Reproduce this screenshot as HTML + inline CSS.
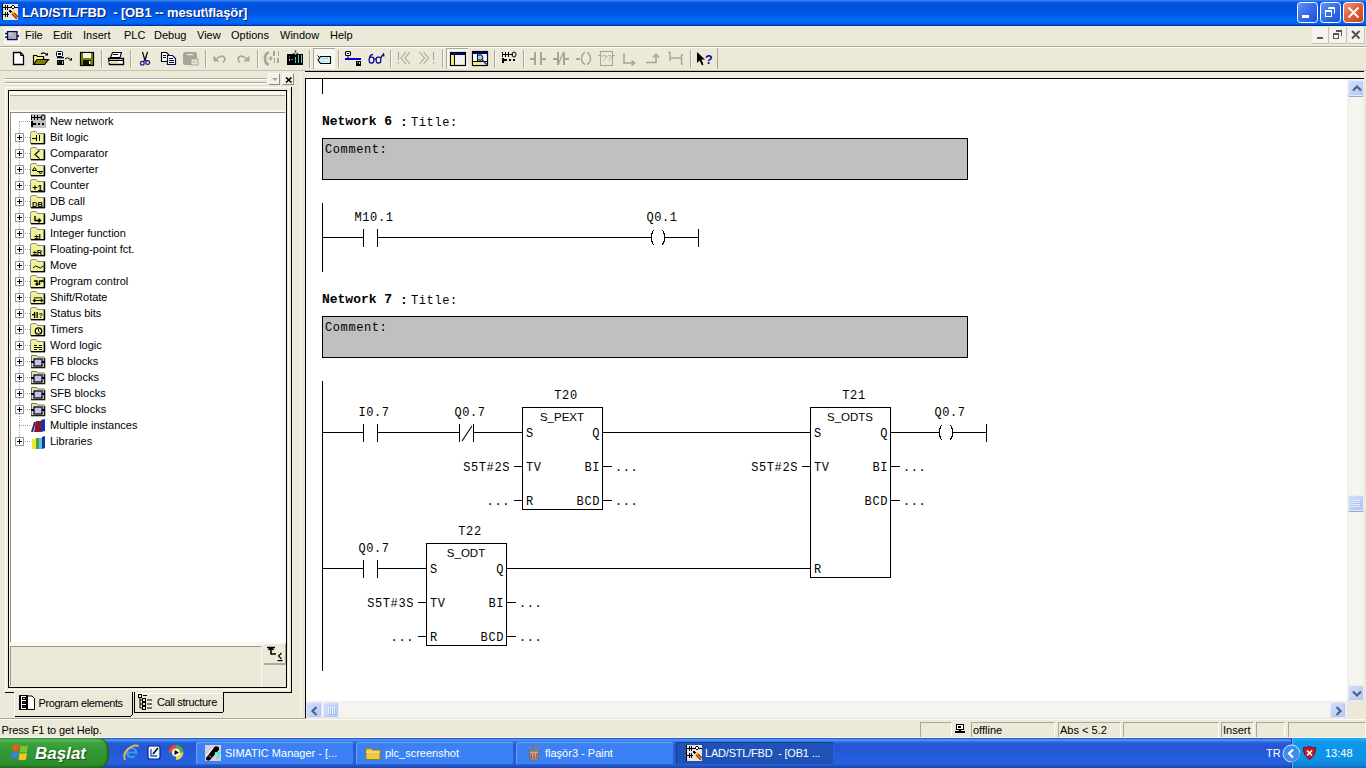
<!DOCTYPE html>
<html><head><meta charset="utf-8"><style>
*{margin:0;padding:0;box-sizing:border-box}
html,body{width:1366px;height:768px;overflow:hidden;background:#ECE9D8;font-family:"Liberation Sans",sans-serif;font-size:11px;color:#000}
.a{position:absolute}
svg text.m{font-family:"Liberation Mono",monospace;font-size:12px;letter-spacing:0.6px}
svg text.mb{font-family:"Liberation Mono",monospace;font-size:13px;font-weight:bold}
svg text.sa{font-family:"Liberation Sans",sans-serif;font-size:11.5px}
#title{left:0;top:0;width:1366px;height:26px;background:linear-gradient(to bottom,#3D8FF8 0px,#2A78EE 1px,#0A5BE0 2px,#0052DE 4px,#0053E0 9px,#0056E6 14px,#0062F0 17px,#0068F6 21px,#0062F2 24px,#0040C0 25px,#0A2A8A 26px)}
#title .t{left:22px;top:5px;color:#fff;font-weight:bold;font-size:13px;letter-spacing:-0.1px;text-shadow:1px 1px 0 #0A1E6E}
.wb{top:3px;width:21px;height:21px;border:1px solid #fff;border-radius:3px;background:linear-gradient(135deg,#5B8CF5,#2A5FE0 60%,#1C4BD0)}
#menu{left:0;top:26px;width:1366px;height:20px;background:#ECE9D8}
#menu span{position:absolute;top:3px;font-size:11px}
#status{left:0;top:718px;width:1366px;height:20px;background:#ECE9D8}
#task{left:0;top:738px;width:1366px;height:30px;background:linear-gradient(to bottom,#2F5CC4 0px,#2F5CC4 1px,#4690F0 1px,#4690F0 3px,#2A62DA 4px,#2456D6 8px,#2A54D4 12px,#235DDC 16px,#2660DE 25px,#2458D0 27px,#1A44B0 30px)}
.mdib{top:1px;width:17px;height:17px;background:#F4F3EE;border-right:1px solid #C8C5B5;border-bottom:1px solid #C8C5B5}
.tr{left:50px;font-size:11px;white-space:nowrap;line-height:14px}
.pbtn{width:12px;height:12px;background:#F2F1EA;border-right:1px solid #8E8C80;border-bottom:1px solid #8E8C80;border-top:1px solid #fff;border-left:1px solid #fff}
.xpb{width:16px;height:16px;border:1px solid #E4ECFC;border-radius:2px;background:linear-gradient(135deg,#D2DEFA 0%,#C4D4F8 50%,#B4C8F4 100%);box-shadow:inset -1px -1px 0 #B8C8E8, 0 1px 0 #9AA8C8}
.sp{height:16px;border-top:1px solid #ACA899;border-left:1px solid #ACA899;border-bottom:1px solid #fff;border-right:1px solid #fff;padding-left:1px;font-size:11px;line-height:14px;white-space:nowrap;overflow:hidden}
.tbtn{top:742px;height:23px;border-radius:3px;background:#3C81F3;box-shadow:inset 1px 1px 0 #6AA0F8,inset -1px -1px 0 #2A62D0}
.tbtn.act{background:#1E52B7;box-shadow:inset 1px 1px 0 #163E90,inset -1px -1px 0 #2A62D0}
.tbt{top:747px;color:#fff;font-size:11px;white-space:nowrap}

</style></head><body>
<div id="title" class="a">
  <svg class="a" style="left:2px;top:4px" width="16" height="16" viewBox="0 0 16 16" shape-rendering="crispEdges">
    <rect x="0" y="0" width="16" height="16" fill="#E8E4E0"/>
    <rect x="0" y="0" width="1" height="16" fill="#000"/>
    <rect x="0" y="3" width="7" height="1" fill="#000"/><rect x="3" y="1" width="1" height="5" fill="#000"/><rect x="5" y="1" width="1" height="5" fill="#000"/>
    <rect x="0" y="10" width="7" height="1" fill="#000"/><rect x="3" y="8" width="1" height="5" fill="#000"/><rect x="5" y="8" width="1" height="5" fill="#000"/>
    <rect x="6" y="3" width="10" height="1" fill="#000"/>
    <path d="M11 1 L13 3 L11 5 L9 3Z" fill="#fff" stroke="#000" stroke-width="1" shape-rendering="auto"/>
    <path d="M7 6 L10 7 L8 9Z" fill="#000"/>
    <path d="M9 9 L11 7 L16 12 L14 15Z" fill="#E8C020" shape-rendering="auto"/>
    <path d="M10 10 L15 15 M12 9 L16 13" stroke="#B02000" stroke-width="1.2" shape-rendering="auto"/>
  </svg>
  <div class="a t">LAD/STL/FBD&nbsp; - [OB1 -- mesut\flaşör]</div>
  <svg class="a" style="left:1297px;top:2px" width="68" height="21" viewBox="0 0 68 21">
    <defs>
      <linearGradient id="bg1" x1="0" y1="0" x2="1" y2="1"><stop offset="0" stop-color="#6A96F8"/><stop offset="0.45" stop-color="#3A6EEA"/><stop offset="1" stop-color="#1E4FD6"/></linearGradient>
      <linearGradient id="bg2" x1="0" y1="0" x2="1" y2="1"><stop offset="0" stop-color="#F0A080"/><stop offset="0.45" stop-color="#E2603A"/><stop offset="1" stop-color="#C84418"/></linearGradient>
    </defs>
    <rect x="0.5" y="0.5" width="20" height="20" rx="3" fill="url(#bg1)" stroke="#fff"/>
    <rect x="5" y="13" width="7" height="3" fill="#fff"/>
    <rect x="23.5" y="0.5" width="20" height="20" rx="3" fill="url(#bg1)" stroke="#fff"/>
    <path d="M31.5 5.5 h6 v6 M31 6.5 h7" fill="none" stroke="#fff" stroke-width="1"/>
    <rect x="28.5" y="8.5" width="6" height="6" fill="none" stroke="#fff" stroke-width="1"/>
    <rect x="28" y="8" width="7" height="2" fill="#fff"/>
    <rect x="46.5" y="0.5" width="20" height="20" rx="3" fill="url(#bg2)" stroke="#fff"/>
    <path d="M51.5 5.5 L61.5 15.5 M61.5 5.5 L51.5 15.5" stroke="#fff" stroke-width="2"/>
  </svg>
</div>
<div class="a" style="left:0;top:26px;width:1366px;height:1px;background:#F4F3EE"></div>
<div id="menu" class="a">
  <div class="a" style="left:4px;top:2px;width:16px;height:16px;background:#F8F7F4"></div>
  <svg class="a" style="left:4px;top:2px" width="16" height="16" viewBox="0 0 16 16">
    <defs><linearGradient id="mdig" x1="0" y1="0" x2="1" y2="1"><stop offset="0" stop-color="#F4F4F4"/><stop offset="0.5" stop-color="#A8AEB0"/><stop offset="1" stop-color="#B8B0E0"/></linearGradient></defs>
    <rect x="3.6" y="3.6" width="9.4" height="8" fill="url(#mdig)" stroke="#0A0A50" stroke-width="1.3"/>
    <rect x="1" y="4.8" width="2.6" height="1.5" fill="#0A0A50"/><rect x="1" y="8.4" width="2.6" height="1.5" fill="#0A0A50"/>
    <rect x="13" y="7.2" width="2.2" height="1.6" fill="#0A0A50"/>
  </svg>
  <span style="left:25px">File</span>
  <span style="left:53px">Edit</span>
  <span style="left:83px">Insert</span>
  <span style="left:124px">PLC</span>
  <span style="left:154px">Debug</span>
  <span style="left:197px">View</span>
  <span style="left:231px">Options</span>
  <span style="left:280px">Window</span>
  <span style="left:330px">Help</span>
  <div class="a mdib" style="left:1312px"><div class="a" style="left:5px;top:10px;width:6px;height:2px;background:#555"></div></div>
  <div class="a mdib" style="left:1330px"><svg class="a" style="left:3px;top:3px" width="10" height="10" viewBox="0 0 10 10" shape-rendering="crispEdges"><rect x="3" y="0" width="6" height="2" fill="#555"/><rect x="8" y="0" width="1" height="6" fill="#555"/><rect x="0" y="3" width="6" height="2" fill="#555"/><rect x="0" y="3" width="1" height="6" fill="#555"/><rect x="5" y="3" width="1" height="6" fill="#555"/><rect x="0" y="8" width="6" height="1" fill="#555"/></svg></div>
  <div class="a mdib" style="left:1348px"><svg class="a" style="left:3px;top:3px" width="10" height="10" viewBox="0 0 10 10"><path d="M1 1 L8.5 8.5 M8.5 1 L1 8.5" stroke="#555" stroke-width="2"/></svg></div>
</div>
<div class="a" style="left:0;top:46px;width:1366px;height:1px;background:#ACA899"></div>
<div class="a" style="left:0;top:47px;width:1366px;height:1px;background:#FFFFFF"></div>
<svg class="a" style="left:0;top:46px" width="730" height="25" viewBox="0 46 730 25">
<g shape-rendering="crispEdges">
  <!-- separators -->
  <g fill="#ACA899"><rect x="101" y="50" width="1" height="18"/><rect x="130" y="50" width="1" height="18"/><rect x="205" y="50" width="1" height="18"/><rect x="257" y="50" width="1" height="18"/><rect x="309" y="50" width="1" height="18"/><rect x="338" y="50" width="1" height="18"/><rect x="390" y="50" width="1" height="18"/><rect x="442" y="50" width="1" height="18"/><rect x="494" y="50" width="1" height="18"/><rect x="523" y="50" width="1" height="18"/><rect x="690" y="50" width="1" height="18"/><rect x="717" y="48" width="1" height="21"/></g>
  <g fill="#F7F6F0"><rect x="102" y="50" width="1" height="18"/><rect x="131" y="50" width="1" height="18"/><rect x="206" y="50" width="1" height="18"/><rect x="258" y="50" width="1" height="18"/><rect x="310" y="50" width="1" height="18"/><rect x="339" y="50" width="1" height="18"/><rect x="391" y="50" width="1" height="18"/><rect x="443" y="50" width="1" height="18"/><rect x="495" y="50" width="1" height="18"/><rect x="524" y="50" width="1" height="18"/><rect x="691" y="50" width="1" height="18"/></g>
  <!-- checked buttons -->
  <rect x="313" y="48" width="22" height="21" fill="#F7F6F1"/>
  <rect x="313" y="48" width="22" height="1" fill="#ACA899"/><rect x="313" y="48" width="1" height="21" fill="#ACA899"/>
  <rect x="446" y="48" width="22" height="21" fill="#F7F6F1"/>
  <rect x="446" y="48" width="22" height="1" fill="#ACA899"/><rect x="446" y="48" width="1" height="21" fill="#ACA899"/>
</g>
<!-- New -->
<path d="M13.5 52.5 H20.5 L23.5 55.5 V64.5 H13.5 Z" fill="#fff" stroke="#000" stroke-width="1.3"/>
<path d="M20.5 52.5 V55.5 H23.5" fill="none" stroke="#000" stroke-width="1"/>
<!-- Open -->
<path d="M33.5 64.5 V55.5 H36.5 L37.5 56.5 H43.5 V59" fill="#F8F880" stroke="#000" stroke-width="1.2"/>
<path d="M33.5 64.5 L37 59.5 H48.5 L44.5 64.5 Z" fill="#808000" stroke="#000" stroke-width="1.2"/>
<path d="M41 54 Q43.5 51.5 46.5 54.5" fill="none" stroke="#000" stroke-width="1.1"/>
<path d="M45 55.5 L48 55.5 L48 52.5Z" fill="#000"/>
<!-- Download -->
<rect x="56.5" y="51.5" width="6" height="5" rx="1" fill="#fff" stroke="#000"/>
<rect x="58" y="53" width="3" height="2" fill="#000080"/>
<rect x="57" y="57" width="7" height="1.3" fill="#000"/>
<rect x="57" y="60" width="7" height="5" fill="#000"/>
<rect x="58" y="61" width="1" height="1" fill="#40A0C0"/><rect x="62" y="61" width="1" height="3" fill="#60D0B0"/>
<path d="M65 59 Q67.5 56.5 70 59" fill="none" stroke="#000" stroke-width="1"/>
<path d="M69 60.5 L72 60.5 L72 57.5Z" fill="#000"/>
<!-- Save -->
<rect x="80.5" y="52.5" width="13" height="13" fill="#808000" stroke="#000" stroke-width="1.2"/>
<rect x="83" y="53" width="8" height="5" fill="#F4F4E8"/>
<rect x="83" y="60" width="8" height="5" fill="#101008"/>
<rect x="89" y="61" width="1.5" height="3" fill="#fff"/>
<!-- Print -->
<path d="M112.5 52.5 H121.5 L120 57.5 H110.5Z" fill="#fff" stroke="#000" stroke-width="1.1"/>
<rect x="113" y="54" width="5" height="1" fill="#000"/>
<path d="M108.5 58.5 H123.5 V64.5 H109.5 Z" fill="#fff" stroke="#000" stroke-width="1.3"/>
<rect x="109" y="60" width="14" height="1" fill="#000"/>
<rect x="109" y="61.5" width="9" height="1.5" fill="#E8E098"/>
<!-- Cut -->
<path d="M142.5 52 L145 60.5 M147.5 52 L145 60.5" stroke="#000" stroke-width="1.2" fill="none"/>
<circle cx="142.3" cy="63.2" r="1.9" fill="none" stroke="#1A1A80" stroke-width="1.2"/>
<circle cx="147.7" cy="62.6" r="1.9" fill="none" stroke="#1A1A80" stroke-width="1.2"/>
<path d="M145 60 L143 62 M145 60 L147 61.5" stroke="#1A1A80" stroke-width="1.2"/>
<!-- Copy -->
<path d="M161.5 52.5 H166.5 L168.5 54.5 V61.5 H161.5Z" fill="#fff" stroke="#000" stroke-width="1.2"/>
<rect x="163" y="55" width="3" height="1" fill="#000"/><rect x="163" y="57" width="3" height="1" fill="#000"/>
<path d="M167.5 55.5 H172.5 L175.5 58.5 V64.5 H167.5Z" fill="#fff" stroke="#0A0A50" stroke-width="1.2"/>
<rect x="169" y="58" width="4" height="1" fill="#000"/><rect x="169" y="60" width="5" height="1" fill="#000"/><rect x="169" y="62" width="5" height="1" fill="#000"/>
<!-- Paste gray -->
<rect x="183.5" y="52.5" width="13" height="12" rx="1.5" fill="#A8A598" stroke="#A8A598"/>
<rect x="187" y="54" width="6" height="1.2" fill="#ECE9D8"/>
<rect x="191" y="59" width="7" height="6" fill="#ECE9D8" stroke="#A8A598"/>
<rect x="192" y="61.5" width="4" height="0.9" fill="#A8A598"/>
<!-- Undo/Redo gray -->
<path d="M217 58.5 Q220.5 55 223.5 56.5 Q226.5 59 223 62.5" fill="none" stroke="#A8A598" stroke-width="1.7"/>
<path d="M213.5 55.5 L219.5 61.5 L213.5 61.5Z" fill="#A8A598"/>
<path d="M246 58.5 Q242.5 55 239.5 56.5 Q236.5 59 240 62.5" fill="none" stroke="#A8A598" stroke-width="1.7"/>
<path d="M249.5 55.5 L243.5 61.5 L249.5 61.5Z" fill="#A8A598"/>
<!-- compile gray -->
<path d="M269 52.5 Q265 53 265 58.5 Q265 64 269 64.5" fill="none" stroke="#A8A598" stroke-width="2.6"/>
<path d="M268 58.5 H271 M270 56.5 L272 58.5 L270 60.5" fill="none" stroke="#A8A598" stroke-width="1.2"/>
<g fill="#A8A598" shape-rendering="crispEdges"><rect x="273" y="51" width="2" height="5"/><rect x="278" y="51" width="1" height="5"/><rect x="274" y="58" width="1" height="5"/><rect x="277" y="58" width="2" height="5"/></g>
<!-- download color -->
<rect x="287" y="54" width="16" height="11" fill="#000"/>
<rect x="298" y="55" width="1" height="8" fill="#50C8C0"/><rect x="301" y="55" width="1" height="8" fill="#50C8C0"/><rect x="295" y="57" width="1" height="6" fill="#50C8C0"/>
<rect x="289" y="56" width="1" height="2" fill="#804020"/><rect x="289" y="59" width="1" height="2" fill="#C0C0C0"/><rect x="291" y="59" width="2" height="1" fill="#4080C0"/>
<path d="M295.5 50.5 V55.5 M293 53.5 L295.5 56 L298 53.5" fill="none" stroke="#000" stroke-width="1.4"/>
<path d="M295.5 51.5 V55" stroke="#D0E040" stroke-width="0.8"/>
<!-- tag -->
<path d="M320.5 56.5 H330.5 V63.5 H320.5 L318 60 Z" fill="#D0F0F8" stroke="#000" stroke-width="1.1"/>
<path d="M317.5 55.5 L320 58" stroke="#000" stroke-width="1"/>
<rect x="322" y="58" width="6" height="1" fill="#80E0D0"/>
<!-- network -->
<rect x="345.5" y="51.5" width="5" height="4" rx="1" fill="#fff" stroke="#000" stroke-width="1.1"/>
<rect x="347" y="53" width="2" height="1" fill="#000080"/>
<rect x="347.5" y="56" width="1" height="2" fill="#000"/>
<rect x="345" y="58" width="16" height="2" fill="#0000D0"/>
<rect x="356" y="61" width="5" height="5" fill="#000"/><rect x="357" y="62" width="1" height="1" fill="#ccc"/><rect x="359" y="62" width="1" height="2" fill="#ccc"/>
<!-- glasses -->
<g fill="none" stroke="#0A0A90" stroke-width="1.3">
<rect x="369.2" y="57.2" width="4.6" height="5.8" rx="1.8"/>
<rect x="376.2" y="57.2" width="4.6" height="5.8" rx="1.8"/>
<path d="M373.8 59 H376.2"/>
<path d="M369.5 58.5 Q369.5 55 373 54.5"/>
<path d="M380.5 58 L383.5 54 L384 56.5"/>
</g>
<!-- !<< >>! gray -->
<g stroke="#A8A598" fill="none" stroke-width="1.1">
<path d="M398.5 52 V60 M398.5 62 V63.5"/>
<path d="M406 52 L401 58 L406 64 M410 52 L405 58 L410 64"/>
<path d="M419.5 52 L424.5 58 L419.5 64 M423.5 52 L428.5 58 L423.5 64"/>
<path d="M433.5 52 V60 M433.5 62 V63.5"/>
</g>
<!-- window icon -->
<rect x="450.5" y="52.5" width="15" height="13" fill="#F4F2EC" stroke="#000" stroke-width="1.2"/>
<rect x="451" y="53" width="14" height="2" fill="#000080"/>
<rect x="451" y="55" width="3" height="10" fill="#F0E880"/>
<rect x="454" y="55" width="1" height="10" fill="#000"/>
<!-- overview icon -->
<rect x="472.5" y="51.5" width="15" height="14" fill="#F8F4F0" stroke="#000" stroke-width="1.2"/><rect x="473" y="54" width="4" height="7" fill="#fff"/><rect x="477" y="54" width="1" height="7" fill="#000"/>
<rect x="473" y="52" width="14" height="2" fill="#000080"/>
<rect x="473" y="62" width="9" height="3" fill="#F0E880"/><rect x="473" y="61" width="14" height="1" fill="#000"/>
<circle cx="480" cy="57.5" r="2.8" fill="#90D8F0" stroke="#000" stroke-width="1"/>
<path d="M482 59.5 L486.5 64.5" stroke="#1030A0" stroke-width="1.6"/>
<!-- new network -->
<g fill="#000" shape-rendering="crispEdges">
<rect x="502" y="52" width="1" height="5"/><rect x="505" y="52" width="1" height="5"/><rect x="502" y="54" width="11" height="1"/><rect x="508" y="52" width="1" height="5"/>
<rect x="502" y="58" width="2" height="5"/><rect x="502" y="59" width="5" height="2"/><rect x="509" y="59" width="2" height="2"/><rect x="513" y="59" width="2" height="2"/>
</g>
<ellipse cx="514" cy="54.5" rx="2" ry="2.5" fill="none" stroke="#000" stroke-width="1"/>
<!-- contact gray -->
<g fill="#A8A598" shape-rendering="crispEdges">
<rect x="530" y="58" width="4" height="1.5"/><rect x="534" y="52" width="1.5" height="13"/><rect x="540" y="52" width="1.5" height="13"/><rect x="541" y="58" width="5" height="1.5"/>
<rect x="553" y="58" width="4" height="1.5"/><rect x="557" y="52" width="1.5" height="13"/><rect x="563" y="52" width="1.5" height="13"/><rect x="564" y="58" width="5" height="1.5"/>
<rect x="576" y="58" width="4" height="1.5"/>
</g>
<path d="M558.5 64 L563 53" stroke="#A8A598" stroke-width="1.3"/>
<ellipse cx="586" cy="58.5" rx="4.5" ry="6" fill="none" stroke="#A8A598" stroke-width="1.5"/><rect x="585" y="51" width="2" height="3" fill="#ECE9D8"/><rect x="585" y="63" width="2" height="3" fill="#ECE9D8"/>
<!-- ?? box -->
<rect x="600.5" y="51.5" width="12" height="14" fill="none" stroke="#A8A598" stroke-width="1.1"/>
<rect x="598" y="55" width="2" height="1" fill="#A8A598"/><rect x="613" y="55" width="2" height="1" fill="#A8A598"/>
<text x="601.5" y="61" font-family="Liberation Sans" font-size="9.5" fill="#A8A598">??</text>
<!-- branch open/close -->
<path d="M624 53 V63 H634 M631.5 60.5 L634.5 63 L631.5 65.5" fill="none" stroke="#A8A598" stroke-width="1.6"/>
<path d="M646 62.5 H656 V55 M653 57.5 L656 54.5 L659 57.5" fill="none" stroke="#A8A598" stroke-width="1.6"/>
<path d="M668 52.5 H670 V60 H669 M670 58 H682 M683 55 H681.5 V64 H683" fill="none" stroke="#A8A598" stroke-width="1.4"/>
<!-- help -->
<path d="M697 52 L697 63 L699.5 60.5 L702 65.5 L703.5 64.5 L701.5 59.5 L705 59.5 Z" fill="#000"/>
<text x="705" y="64" font-family="Liberation Sans" font-weight="bold" font-size="12.5" fill="#0A0A90">?</text>
</svg>

<div class="a" style="left:0;top:70px;width:1366px;height:1px;background:#C5C2B2"></div>

<!-- left panel grip -->
<div class="a" style="left:5px;top:78px;width:261px;height:1px;background:#ACA899"></div>
<div class="a" style="left:5px;top:79px;width:261px;height:1px;background:#fff"></div>
<div class="a" style="left:5px;top:82px;width:261px;height:1px;background:#ACA899"></div>
<div class="a" style="left:5px;top:83px;width:261px;height:1px;background:#fff"></div>
<div class="a pbtn" style="left:268px;top:73px"><svg class="a" style="left:3px;top:4px" width="6" height="4" viewBox="0 0 6 4"><path d="M0 0 H6 L3 3Z" fill="#A8A598"/></svg></div>
<div class="a pbtn" style="left:282px;top:73px"><svg class="a" style="left:2px;top:3px" width="8" height="7" viewBox="0 0 8 7"><path d="M1 0.5 L6.5 5.5 M6.5 0.5 L1 5.5" stroke="#000" stroke-width="1.6"/></svg></div>
<!-- outer tab page frame -->
<div class="a" style="left:5px;top:87px;width:286px;height:1px;background:#fff"></div>
<div class="a" style="left:5px;top:87px;width:1px;height:605px;background:#fff"></div>
<div class="a" style="left:291px;top:87px;width:1px;height:606px;background:#000"></div>
<div class="a" style="left:5px;top:692px;width:9px;height:1px;background:#000"></div>
<div class="a" style="left:133px;top:692px;width:159px;height:1px;background:#000"></div>
<div class="a" style="left:288px;top:90px;width:1px;height:600px;background:#fff"></div>
<div class="a" style="left:8px;top:689px;width:281px;height:1px;background:#fff"></div>
<!-- inner frame -->
<div class="a" style="left:8px;top:90px;width:279px;height:598px;border:1px solid #000;background:#ECE9D8"></div>
<div class="a" style="left:9px;top:91px;width:276px;height:4px;background:#F8F7F0"></div>
<div class="a" style="left:9px;top:95px;width:276px;height:1px;background:#ACA899"></div>
<div class="a" style="left:9px;top:110px;width:276px;height:2px;background:#FBFAF5"></div>
<div class="a" style="left:9px;top:112px;width:276px;height:1px;background:#8E8C80"></div>
<div class="a" style="left:9px;top:91px;width:1px;height:550px;background:#FBFAF5"></div>
<div class="a" style="left:10px;top:113px;width:275px;height:529px;background:#fff"></div>
<div class="a" style="left:10px;top:113px;width:1px;height:529px;background:#8E8C80"></div>
<div class="a" style="left:285px;top:91px;width:1px;height:551px;background:#F4F3EC"></div>
<!-- detail pane -->
<div class="a" style="left:9px;top:642px;width:276px;height:4px;background:#F8F7F0"></div>
<div class="a" style="left:10px;top:646px;width:252px;height:40px;background:#ECE9D8;border-top:1px solid #9A988C;border-left:1px solid #9A988C;border-right:1px solid #FBFAF5"></div>
<div class="a" style="left:264px;top:643px;width:22px;height:22px;background:#ECE9D8;border-right:1px solid #ACA899;border-bottom:2px solid #ACA899;border-top:1px solid #FBFAF5"></div>
<svg class="a" style="left:266px;top:645px" width="18" height="18" viewBox="0 0 18 18"><path d="M1 2.5 H9 M5 2.5 L2.5 5 M5 2.5 L7.5 5 M5 3 V9 H10" fill="none" stroke="#000" stroke-width="1.6"/><path d="M15.5 8 L12.5 11 L15.5 14" fill="none" stroke="#000" stroke-width="1.1"/><rect x="11.5" y="15" width="5" height="1.2" fill="#000"/></svg>
<svg class="a" style="left:0;top:0" width="300" height="460" viewBox="0 0 300 460"><path d="M19.5 122 V437" stroke="#A0A0A0" stroke-dasharray="1 1" stroke-width="1"/><path d="M19 121.5 h11" stroke="#A0A0A0" stroke-dasharray="1 1" stroke-width="1"/><rect x="31" y="114" width="15" height="14" fill="#C0C0C0"/><g fill="#000" shape-rendering="crispEdges"><rect x="31" y="115" width="1" height="5"/><rect x="34" y="115" width="1" height="5"/><rect x="31" y="117" width="11" height="1"/><rect x="37" y="115" width="1" height="5"/><rect x="31" y="121" width="2" height="6"/><rect x="31" y="123" width="5" height="2"/><rect x="38" y="123" width="2" height="2"/><rect x="42" y="123" width="2" height="2"/></g><ellipse cx="43" cy="117.5" rx="2" ry="2.5" fill="none" stroke="#000" stroke-width="1"/><rect x="15.5" y="133.5" width="8" height="8" fill="#fff" stroke="#919B9C" stroke-width="1"/><rect x="17" y="137" width="5" height="1" fill="#000" shape-rendering="crispEdges"/><rect x="19" y="135" width="1" height="5" fill="#000" shape-rendering="crispEdges"/><path d="M25 137.5 h5" stroke="#A0A0A0" stroke-dasharray="1 1" stroke-width="1"/><path d="M30.5 133.5 q0 -2 2 -2 h3 q1 0 1.5 1.5 l0.5 0.5 h6.5 v10 h-13.5 z" fill="#F2F29A" stroke="#8A8A70" stroke-width="1"/><rect x="31" y="143" width="14" height="1.4" fill="#000"/><rect x="43.8" y="133.5" width="1.4" height="10.5" fill="#000"/><g fill="#000" shape-rendering="crispEdges"><rect x="32" y="138" width="4" height="1"/><rect x="36" y="135" width="1" height="6"/><rect x="39" y="135" width="1" height="6"/></g><rect x="15.5" y="149.5" width="8" height="8" fill="#fff" stroke="#919B9C" stroke-width="1"/><rect x="17" y="153" width="5" height="1" fill="#000" shape-rendering="crispEdges"/><rect x="19" y="151" width="1" height="5" fill="#000" shape-rendering="crispEdges"/><path d="M25 153.5 h5" stroke="#A0A0A0" stroke-dasharray="1 1" stroke-width="1"/><path d="M30.5 149.5 q0 -2 2 -2 h3 q1 0 1.5 1.5 l0.5 0.5 h6.5 v10 h-13.5 z" fill="#F2F29A" stroke="#8A8A70" stroke-width="1"/><rect x="31" y="159" width="14" height="1.4" fill="#000"/><rect x="43.8" y="149.5" width="1.4" height="10.5" fill="#000"/><path d="M39.5 150.5 L35 154.5 L39.5 158.5" fill="none" stroke="#000" stroke-width="1.1"/><rect x="15.5" y="165.5" width="8" height="8" fill="#fff" stroke="#919B9C" stroke-width="1"/><rect x="17" y="169" width="5" height="1" fill="#000" shape-rendering="crispEdges"/><rect x="19" y="167" width="1" height="5" fill="#000" shape-rendering="crispEdges"/><path d="M25 169.5 h5" stroke="#A0A0A0" stroke-dasharray="1 1" stroke-width="1"/><path d="M30.5 165.5 q0 -2 2 -2 h3 q1 0 1.5 1.5 l0.5 0.5 h6.5 v10 h-13.5 z" fill="#F2F29A" stroke="#8A8A70" stroke-width="1"/><rect x="31" y="175" width="14" height="1.4" fill="#000"/><rect x="43.8" y="165.5" width="1.4" height="10.5" fill="#000"/><path d="M32 170.5 h5 M32.5 170.5 L34.5 167.5 L36.5 170.5 M37 171.5 h6 M38.5 171.5 L40.5 174 L42.5 171.5" fill="none" stroke="#000" stroke-width="1"/><rect x="15.5" y="181.5" width="8" height="8" fill="#fff" stroke="#919B9C" stroke-width="1"/><rect x="17" y="185" width="5" height="1" fill="#000" shape-rendering="crispEdges"/><rect x="19" y="183" width="1" height="5" fill="#000" shape-rendering="crispEdges"/><path d="M25 185.5 h5" stroke="#A0A0A0" stroke-dasharray="1 1" stroke-width="1"/><path d="M30.5 181.5 q0 -2 2 -2 h3 q1 0 1.5 1.5 l0.5 0.5 h6.5 v10 h-13.5 z" fill="#F2F29A" stroke="#8A8A70" stroke-width="1"/><rect x="31" y="191" width="14" height="1.4" fill="#000"/><rect x="43.8" y="181.5" width="1.4" height="10.5" fill="#000"/><text x="37.5" y="190.5" text-anchor="middle" font-family="Liberation Sans" font-weight="bold" font-size="9" fill="#000">+1</text><rect x="15.5" y="197.5" width="8" height="8" fill="#fff" stroke="#919B9C" stroke-width="1"/><rect x="17" y="201" width="5" height="1" fill="#000" shape-rendering="crispEdges"/><rect x="19" y="199" width="1" height="5" fill="#000" shape-rendering="crispEdges"/><path d="M25 201.5 h5" stroke="#A0A0A0" stroke-dasharray="1 1" stroke-width="1"/><path d="M30.5 197.5 q0 -2 2 -2 h3 q1 0 1.5 1.5 l0.5 0.5 h6.5 v10 h-13.5 z" fill="#F2F29A" stroke="#8A8A70" stroke-width="1"/><rect x="31" y="207" width="14" height="1.4" fill="#000"/><rect x="43.8" y="197.5" width="1.4" height="10.5" fill="#000"/><text x="37.5" y="206.5" text-anchor="middle" font-family="Liberation Sans" font-weight="bold" font-size="7.5" fill="#000">DB</text><rect x="15.5" y="213.5" width="8" height="8" fill="#fff" stroke="#919B9C" stroke-width="1"/><rect x="17" y="217" width="5" height="1" fill="#000" shape-rendering="crispEdges"/><rect x="19" y="215" width="1" height="5" fill="#000" shape-rendering="crispEdges"/><path d="M25 217.5 h5" stroke="#A0A0A0" stroke-dasharray="1 1" stroke-width="1"/><path d="M30.5 213.5 q0 -2 2 -2 h3 q1 0 1.5 1.5 l0.5 0.5 h6.5 v10 h-13.5 z" fill="#F2F29A" stroke="#8A8A70" stroke-width="1"/><rect x="31" y="223" width="14" height="1.4" fill="#000"/><rect x="43.8" y="213.5" width="1.4" height="10.5" fill="#000"/><path d="M35 216 v4.5 h5 M38.5 218.5 l2 2 l-2 2" fill="none" stroke="#000" stroke-width="1.4"/><rect x="15.5" y="229.5" width="8" height="8" fill="#fff" stroke="#919B9C" stroke-width="1"/><rect x="17" y="233" width="5" height="1" fill="#000" shape-rendering="crispEdges"/><rect x="19" y="231" width="1" height="5" fill="#000" shape-rendering="crispEdges"/><path d="M25 233.5 h5" stroke="#A0A0A0" stroke-dasharray="1 1" stroke-width="1"/><path d="M30.5 229.5 q0 -2 2 -2 h3 q1 0 1.5 1.5 l0.5 0.5 h6.5 v10 h-13.5 z" fill="#F2F29A" stroke="#8A8A70" stroke-width="1"/><rect x="31" y="239" width="14" height="1.4" fill="#000"/><rect x="43.8" y="229.5" width="1.4" height="10.5" fill="#000"/><text x="37.5" y="238.5" text-anchor="middle" font-family="Liberation Sans" font-weight="bold" font-size="8" fill="#000">±I</text><rect x="15.5" y="245.5" width="8" height="8" fill="#fff" stroke="#919B9C" stroke-width="1"/><rect x="17" y="249" width="5" height="1" fill="#000" shape-rendering="crispEdges"/><rect x="19" y="247" width="1" height="5" fill="#000" shape-rendering="crispEdges"/><path d="M25 249.5 h5" stroke="#A0A0A0" stroke-dasharray="1 1" stroke-width="1"/><path d="M30.5 245.5 q0 -2 2 -2 h3 q1 0 1.5 1.5 l0.5 0.5 h6.5 v10 h-13.5 z" fill="#F2F29A" stroke="#8A8A70" stroke-width="1"/><rect x="31" y="255" width="14" height="1.4" fill="#000"/><rect x="43.8" y="245.5" width="1.4" height="10.5" fill="#000"/><text x="37.5" y="254.5" text-anchor="middle" font-family="Liberation Sans" font-weight="bold" font-size="7.5" fill="#000">±R</text><rect x="15.5" y="261.5" width="8" height="8" fill="#fff" stroke="#919B9C" stroke-width="1"/><rect x="17" y="265" width="5" height="1" fill="#000" shape-rendering="crispEdges"/><rect x="19" y="263" width="1" height="5" fill="#000" shape-rendering="crispEdges"/><path d="M25 265.5 h5" stroke="#A0A0A0" stroke-dasharray="1 1" stroke-width="1"/><path d="M30.5 261.5 q0 -2 2 -2 h3 q1 0 1.5 1.5 l0.5 0.5 h6.5 v10 h-13.5 z" fill="#F2F29A" stroke="#8A8A70" stroke-width="1"/><rect x="31" y="271" width="14" height="1.4" fill="#000"/><rect x="43.8" y="261.5" width="1.4" height="10.5" fill="#000"/><path d="M33 268 q2.5 -3.5 5 -1 q2.5 2.5 5 -1" fill="none" stroke="#000" stroke-width="1"/><rect x="15.5" y="277.5" width="8" height="8" fill="#fff" stroke="#919B9C" stroke-width="1"/><rect x="17" y="281" width="5" height="1" fill="#000" shape-rendering="crispEdges"/><rect x="19" y="279" width="1" height="5" fill="#000" shape-rendering="crispEdges"/><path d="M25 281.5 h5" stroke="#A0A0A0" stroke-dasharray="1 1" stroke-width="1"/><path d="M30.5 277.5 q0 -2 2 -2 h3 q1 0 1.5 1.5 l0.5 0.5 h6.5 v10 h-13.5 z" fill="#F2F29A" stroke="#8A8A70" stroke-width="1"/><rect x="31" y="287" width="14" height="1.4" fill="#000"/><rect x="43.8" y="277.5" width="1.4" height="10.5" fill="#000"/><path d="M34 281 h3 v4 M35.5 283.5 l1.5 1.5 l1.5 -1.5 M39.5 285 v-4 h3 M41 282 l1.5 -1.5 l1.5 1.5" fill="none" stroke="#000" stroke-width="1.3"/><rect x="15.5" y="293.5" width="8" height="8" fill="#fff" stroke="#919B9C" stroke-width="1"/><rect x="17" y="297" width="5" height="1" fill="#000" shape-rendering="crispEdges"/><rect x="19" y="295" width="1" height="5" fill="#000" shape-rendering="crispEdges"/><path d="M25 297.5 h5" stroke="#A0A0A0" stroke-dasharray="1 1" stroke-width="1"/><path d="M30.5 293.5 q0 -2 2 -2 h3 q1 0 1.5 1.5 l0.5 0.5 h6.5 v10 h-13.5 z" fill="#F2F29A" stroke="#8A8A70" stroke-width="1"/><rect x="31" y="303" width="14" height="1.4" fill="#000"/><rect x="43.8" y="293.5" width="1.4" height="10.5" fill="#000"/><path d="M33.5 300.5 h9 M35 299 l-1.5 1.5 l1.5 1.5 M41 299 l1.5 1.5 l-1.5 1.5 M35 297 v1.5 M37 297 v1.5 M39 297 v1.5 M41 297 v1.5" fill="none" stroke="#000" stroke-width="1.2"/><rect x="15.5" y="309.5" width="8" height="8" fill="#fff" stroke="#919B9C" stroke-width="1"/><rect x="17" y="313" width="5" height="1" fill="#000" shape-rendering="crispEdges"/><rect x="19" y="311" width="1" height="5" fill="#000" shape-rendering="crispEdges"/><path d="M25 313.5 h5" stroke="#A0A0A0" stroke-dasharray="1 1" stroke-width="1"/><path d="M30.5 309.5 q0 -2 2 -2 h3 q1 0 1.5 1.5 l0.5 0.5 h6.5 v10 h-13.5 z" fill="#F2F29A" stroke="#8A8A70" stroke-width="1"/><rect x="31" y="319" width="14" height="1.4" fill="#000"/><rect x="43.8" y="309.5" width="1.4" height="10.5" fill="#000"/><g fill="#000"><rect x="32" y="314" width="3" height="1.3"/><rect x="34" y="312" width="1.3" height="6"/><rect x="36.5" y="312" width="1.3" height="6"/></g><text x="38.5" y="318" font-family="Liberation Sans" font-weight="bold" font-size="7" fill="#000">?</text><rect x="15.5" y="325.5" width="8" height="8" fill="#fff" stroke="#919B9C" stroke-width="1"/><rect x="17" y="329" width="5" height="1" fill="#000" shape-rendering="crispEdges"/><rect x="19" y="327" width="1" height="5" fill="#000" shape-rendering="crispEdges"/><path d="M25 329.5 h5" stroke="#A0A0A0" stroke-dasharray="1 1" stroke-width="1"/><path d="M30.5 325.5 q0 -2 2 -2 h3 q1 0 1.5 1.5 l0.5 0.5 h6.5 v10 h-13.5 z" fill="#F2F29A" stroke="#8A8A70" stroke-width="1"/><rect x="31" y="335" width="14" height="1.4" fill="#000"/><rect x="43.8" y="325.5" width="1.4" height="10.5" fill="#000"/><circle cx="38.5" cy="331" r="3.2" fill="none" stroke="#000" stroke-width="1.3"/><path d="M38.5 329 v2 l1.5 1.5" fill="none" stroke="#000" stroke-width="1"/><rect x="15.5" y="341.5" width="8" height="8" fill="#fff" stroke="#919B9C" stroke-width="1"/><rect x="17" y="345" width="5" height="1" fill="#000" shape-rendering="crispEdges"/><rect x="19" y="343" width="1" height="5" fill="#000" shape-rendering="crispEdges"/><path d="M25 345.5 h5" stroke="#A0A0A0" stroke-dasharray="1 1" stroke-width="1"/><path d="M30.5 341.5 q0 -2 2 -2 h3 q1 0 1.5 1.5 l0.5 0.5 h6.5 v10 h-13.5 z" fill="#F2F29A" stroke="#8A8A70" stroke-width="1"/><rect x="31" y="351" width="14" height="1.4" fill="#000"/><rect x="43.8" y="341.5" width="1.4" height="10.5" fill="#000"/><path d="M34 345.5 h3 M39 345.5 h3 M34 347.5 h8 M34 349.5 h3 M39 349.5 h3" stroke="#000" stroke-width="1"/><rect x="15.5" y="357.5" width="8" height="8" fill="#fff" stroke="#919B9C" stroke-width="1"/><rect x="17" y="361" width="5" height="1" fill="#000" shape-rendering="crispEdges"/><rect x="19" y="359" width="1" height="5" fill="#000" shape-rendering="crispEdges"/><path d="M25 361.5 h5" stroke="#A0A0A0" stroke-dasharray="1 1" stroke-width="1"/><path d="M31.5 355.5 h5 l1 1.5 h6.5 v10.5 h-12.5 z" fill="#ECEC88" stroke="#7A7A40" stroke-width="1"/><rect x="31" y="367" width="14" height="1.3" fill="#202010"/><rect x="44" y="358" width="1.3" height="10" fill="#202010"/><rect x="31" y="361" width="14" height="2" fill="#000040"/><rect x="34" y="359" width="8" height="7" fill="#C8C8D8" stroke="#000060" stroke-width="1.3"/><rect x="15.5" y="373.5" width="8" height="8" fill="#fff" stroke="#919B9C" stroke-width="1"/><rect x="17" y="377" width="5" height="1" fill="#000" shape-rendering="crispEdges"/><rect x="19" y="375" width="1" height="5" fill="#000" shape-rendering="crispEdges"/><path d="M25 377.5 h5" stroke="#A0A0A0" stroke-dasharray="1 1" stroke-width="1"/><path d="M31.5 371.5 h5 l1 1.5 h6.5 v10.5 h-12.5 z" fill="#ECEC88" stroke="#7A7A40" stroke-width="1"/><rect x="31" y="383" width="14" height="1.3" fill="#202010"/><rect x="44" y="374" width="1.3" height="10" fill="#202010"/><rect x="31" y="377" width="14" height="2" fill="#000040"/><rect x="34" y="375" width="8" height="7" fill="#C8C8D8" stroke="#000060" stroke-width="1.3"/><rect x="15.5" y="389.5" width="8" height="8" fill="#fff" stroke="#919B9C" stroke-width="1"/><rect x="17" y="393" width="5" height="1" fill="#000" shape-rendering="crispEdges"/><rect x="19" y="391" width="1" height="5" fill="#000" shape-rendering="crispEdges"/><path d="M25 393.5 h5" stroke="#A0A0A0" stroke-dasharray="1 1" stroke-width="1"/><path d="M31.5 387.5 h5 l1 1.5 h6.5 v10.5 h-12.5 z" fill="#ECEC88" stroke="#7A7A40" stroke-width="1"/><rect x="31" y="399" width="14" height="1.3" fill="#202010"/><rect x="44" y="390" width="1.3" height="10" fill="#202010"/><rect x="31" y="393" width="14" height="2" fill="#000040"/><rect x="34" y="391" width="8" height="7" fill="#C8C8D8" stroke="#000060" stroke-width="1.3"/><rect x="15.5" y="405.5" width="8" height="8" fill="#fff" stroke="#919B9C" stroke-width="1"/><rect x="17" y="409" width="5" height="1" fill="#000" shape-rendering="crispEdges"/><rect x="19" y="407" width="1" height="5" fill="#000" shape-rendering="crispEdges"/><path d="M25 409.5 h5" stroke="#A0A0A0" stroke-dasharray="1 1" stroke-width="1"/><path d="M31.5 403.5 h5 l1 1.5 h6.5 v10.5 h-12.5 z" fill="#ECEC88" stroke="#7A7A40" stroke-width="1"/><rect x="31" y="415" width="14" height="1.3" fill="#202010"/><rect x="44" y="406" width="1.3" height="10" fill="#202010"/><rect x="31" y="409" width="14" height="2" fill="#000040"/><rect x="34" y="407" width="8" height="7" fill="#C8C8D8" stroke="#000060" stroke-width="1.3"/><path d="M19 425.5 h11" stroke="#A0A0A0" stroke-dasharray="1 1" stroke-width="1"/><path d="M31 432 L34 422 h2 l-3 10z" fill="#402060"/><path d="M34 432 L36 421 h2 v11z" fill="#702040"/><rect x="38" y="421" width="3" height="11" fill="#A01020"/><path d="M41 432 V420 l4 -1 V431z" fill="#1830B0"/><rect x="15.5" y="437.5" width="8" height="8" fill="#fff" stroke="#919B9C" stroke-width="1"/><rect x="17" y="441" width="5" height="1" fill="#000" shape-rendering="crispEdges"/><rect x="19" y="439" width="1" height="5" fill="#000" shape-rendering="crispEdges"/><path d="M25 441.5 h5" stroke="#A0A0A0" stroke-dasharray="1 1" stroke-width="1"/><path d="M32 439 h4 v10 h-4z" fill="#F0E820"/><path d="M36 438 h3 v11 h-3z" fill="#40A060"/><path d="M39 438 h3 v11 h-3z" fill="#60C0D0"/><path d="M42 437 l3 -1 v12 l-3 1z" fill="#1830B0"/></svg>
<div class="a tr" style="top:114px">New network</div><div class="a tr" style="top:130px">Bit logic</div><div class="a tr" style="top:146px">Comparator</div><div class="a tr" style="top:162px">Converter</div><div class="a tr" style="top:178px">Counter</div><div class="a tr" style="top:194px">DB call</div><div class="a tr" style="top:210px">Jumps</div><div class="a tr" style="top:226px">Integer function</div><div class="a tr" style="top:242px">Floating-point fct.</div><div class="a tr" style="top:258px">Move</div><div class="a tr" style="top:274px">Program control</div><div class="a tr" style="top:290px">Shift/Rotate</div><div class="a tr" style="top:306px">Status bits</div><div class="a tr" style="top:322px">Timers</div><div class="a tr" style="top:338px">Word logic</div><div class="a tr" style="top:354px">FB blocks</div><div class="a tr" style="top:370px">FC blocks</div><div class="a tr" style="top:386px">SFB blocks</div><div class="a tr" style="top:402px">SFC blocks</div><div class="a tr" style="top:418px">Multiple instances</div><div class="a tr" style="top:434px">Libraries</div>
<!-- tabs -->
<div class="a" style="left:14px;top:692px;width:120px;height:25px;background:#ECE9D8"></div>
<div class="a" style="left:14px;top:692px;width:1px;height:24px;background:#fff"></div>
<div class="a" style="left:15px;top:716px;width:116px;height:1px;background:#000"></div>
<div class="a" style="left:132px;top:692px;width:1px;height:23px;background:#000"></div>
<div class="a" style="left:131px;top:715px;width:1px;height:1px;background:#000"></div>
<div class="a" style="left:134px;top:692px;width:90px;height:21px;background:#ECE9D8"></div>
<div class="a" style="left:134px;top:692px;width:1px;height:21px;background:#000"></div>
<div class="a" style="left:135px;top:712px;width:88px;height:1px;background:#000"></div>
<div class="a" style="left:223px;top:692px;width:1px;height:20px;background:#000"></div>
<div class="a" style="left:135px;top:693px;width:88px;height:1px;background:#fff"></div>
<svg class="a" style="left:19px;top:695px" width="16" height="16" viewBox="0 0 16 16" shape-rendering="crispEdges">
 <rect x="0" y="0" width="9" height="15" fill="#000"/><rect x="2" y="1" width="5" height="13" fill="#fff"/>
 <rect x="3" y="2" width="4" height="3" fill="#000"/><rect x="4" y="3" width="2" height="1" fill="#E8E880"/>
 <rect x="3" y="6" width="4" height="3" fill="#000"/><rect x="4" y="7" width="2" height="1" fill="#2020D0"/>
 <rect x="3" y="10" width="4" height="3" fill="#000"/><rect x="4" y="11" width="2" height="1" fill="#2020D0"/>
 <path d="M9 1 H13 L15.5 3.5 V14.5 H9" fill="#fff" stroke="#000" stroke-width="1" shape-rendering="auto"/>
</svg>
<div class="a" style="left:38.5px;top:697px;font-size:11px;letter-spacing:-0.35px">Program elements</div>
<svg class="a" style="left:138px;top:694px" width="16" height="16" viewBox="0 0 16 16">
 <g fill="none" stroke="#000" stroke-width="1"><rect x="0.5" y="0.5" width="3" height="3"/><rect x="4.5" y="4.5" width="3" height="3"/><rect x="4.5" y="8.5" width="3" height="3"/><rect x="4.5" y="12.5" width="3" height="3"/>
 <path d="M2 4 V14 H4.5 M2 6 H4.5 M2 10 H4.5"/><path d="M5 1.5 H9 M9 6 H14 M9 10 H14 M9 14 H14"/></g>
</svg>
<div class="a" style="left:157px;top:696px;font-size:11px;letter-spacing:-0.35px">Call structure</div>
<!-- splitter -->
<div class="a" style="left:300px;top:72px;width:1px;height:646px;background:#F6F5EE"></div>

<!-- editor frame -->
<div class="a" style="left:305px;top:71px;width:1059px;height:1px;background:#000"></div>
<div class="a" style="left:305px;top:72px;width:1059px;height:6px;background:#F0EEE2"></div>
<div class="a" style="left:305px;top:78px;width:1059px;height:1px;background:#000"></div>
<div class="a" style="left:305px;top:78px;width:1px;height:640px;background:#000"></div>
<div class="a" style="left:306px;top:79px;width:1042px;height:622px;background:#fff"></div>
<svg class="a" style="left:306px;top:79px" width="1042" height="622" viewBox="306 79 1042 622" shape-rendering="crispEdges"><g fill="#000"><rect x="322" y="79" width="1" height="15"/><text class="mb" transform="translate(322,125) scale(1,0.95)">Network 6</text><text class="mb" transform="translate(400,126) scale(1,1.0)" x="0" y="0" text-anchor="start">:</text><text class="m" transform="translate(411,126) scale(1,1.0)" x="0" y="0" text-anchor="start">Title:</text><rect x="322.5" y="138.5" width="645" height="41" fill="#C0C0C0" stroke="#000" stroke-width="1"/><text class="m" transform="translate(325,153) scale(1,1.0)" x="0" y="0" text-anchor="start">Comment:</text><rect x="322" y="203" width="1" height="69"/><rect x="322" y="237" width="42" height="1"/><rect x="363" y="229" width="1" height="18"/><rect x="377" y="229" width="1" height="18"/><text class="m" transform="translate(374,221) scale(1,1.0)" x="0" y="0" text-anchor="middle">M10.1</text><rect x="377" y="237" width="275" height="1"/><path d="M653.5,230 Q649,237.5 653.5,245" fill="none" stroke="#000" stroke-width="1.2"/><path d="M662.5,230 Q667,237.5 662.5,245" fill="none" stroke="#000" stroke-width="1.2"/><text class="m" transform="translate(662,221) scale(1,1.0)" x="0" y="0" text-anchor="middle">Q0.1</text><rect x="665" y="237" width="34" height="1"/><rect x="698" y="229" width="1" height="18"/><text class="mb" transform="translate(322,303) scale(1,0.95)">Network 7</text><text class="mb" transform="translate(400,304) scale(1,1.0)" x="0" y="0" text-anchor="start">:</text><text class="m" transform="translate(411,304) scale(1,1.0)" x="0" y="0" text-anchor="start">Title:</text><rect x="322.5" y="316.5" width="645" height="41" fill="#C0C0C0" stroke="#000" stroke-width="1"/><text class="m" transform="translate(325,331) scale(1,1.0)" x="0" y="0" text-anchor="start">Comment:</text><rect x="322" y="381" width="1" height="290"/><rect x="322" y="432" width="42" height="1"/><rect x="363" y="424" width="1" height="18"/><rect x="377" y="424" width="1" height="18"/><text class="m" transform="translate(374,416) scale(1,1.0)" x="0" y="0" text-anchor="middle">I0.7</text><rect x="377" y="432" width="83" height="1"/><rect x="459" y="424" width="1" height="18"/><rect x="473" y="424" width="1" height="18"/><line x1="462" y1="441" x2="472" y2="426" stroke="#000" stroke-width="1.1" shape-rendering="auto"/><text class="m" transform="translate(470,416) scale(1,1.0)" x="0" y="0" text-anchor="middle">Q0.7</text><rect x="473" y="432" width="50" height="1"/><rect x="522" y="407" width="81" height="1"/><rect x="522" y="509" width="81" height="1"/><rect x="522" y="407" width="1" height="103"/><rect x="602" y="407" width="1" height="103"/><text class="m" transform="translate(566.0,399) scale(1,1.0)" x="0" y="0" text-anchor="middle">T20</text><text class="sa" transform="translate(562.0,420.5) scale(1,1.0)" x="0" y="0" text-anchor="middle">S_PEXT</text><text class="m" transform="translate(526,437) scale(1,1.0)" x="0" y="0" text-anchor="start">S</text><text class="m" transform="translate(600,437) scale(1,1.0)" x="0" y="0" text-anchor="end">Q</text><text class="m" transform="translate(526,471) scale(1,1.0)" x="0" y="0" text-anchor="start">TV</text><rect x="514" y="466" width="8" height="1"/><text class="m" transform="translate(510,471) scale(1,1.0)" x="0" y="0" text-anchor="end">S5T#2S</text><text class="m" transform="translate(600,471) scale(1,1.0)" x="0" y="0" text-anchor="end">BI</text><rect x="603" y="466" width="9" height="1"/><text class="m" transform="translate(615,471) scale(1,1.0)" x="0" y="0" text-anchor="start">...</text><text class="m" transform="translate(600,505) scale(1,1.0)" x="0" y="0" text-anchor="end">BCD</text><rect x="603" y="500" width="9" height="1"/><text class="m" transform="translate(615,505) scale(1,1.0)" x="0" y="0" text-anchor="start">...</text><text class="m" transform="translate(526,505) scale(1,1.0)" x="0" y="0" text-anchor="start">R</text><rect x="514" y="500" width="8" height="1"/><text class="m" transform="translate(510,505) scale(1,1.0)" x="0" y="0" text-anchor="end">...</text><rect x="602" y="432" width="209" height="1"/><rect x="810" y="407" width="81" height="1"/><rect x="810" y="577" width="81" height="1"/><rect x="810" y="407" width="1" height="171"/><rect x="890" y="407" width="1" height="171"/><text class="m" transform="translate(854.0,399) scale(1,1.0)" x="0" y="0" text-anchor="middle">T21</text><text class="sa" transform="translate(850.0,420.5) scale(1,1.0)" x="0" y="0" text-anchor="middle">S_ODTS</text><text class="m" transform="translate(814,437) scale(1,1.0)" x="0" y="0" text-anchor="start">S</text><text class="m" transform="translate(888,437) scale(1,1.0)" x="0" y="0" text-anchor="end">Q</text><text class="m" transform="translate(814,471) scale(1,1.0)" x="0" y="0" text-anchor="start">TV</text><rect x="802" y="466" width="8" height="1"/><text class="m" transform="translate(798,471) scale(1,1.0)" x="0" y="0" text-anchor="end">S5T#2S</text><text class="m" transform="translate(888,471) scale(1,1.0)" x="0" y="0" text-anchor="end">BI</text><rect x="891" y="466" width="9" height="1"/><text class="m" transform="translate(903,471) scale(1,1.0)" x="0" y="0" text-anchor="start">...</text><text class="m" transform="translate(888,505) scale(1,1.0)" x="0" y="0" text-anchor="end">BCD</text><rect x="891" y="500" width="9" height="1"/><text class="m" transform="translate(903,505) scale(1,1.0)" x="0" y="0" text-anchor="start">...</text><text class="m" transform="translate(814,573) scale(1,1.0)" x="0" y="0" text-anchor="start">R</text><rect x="890" y="432" width="50" height="1"/><path d="M941.5,425 Q937,432.5 941.5,440" fill="none" stroke="#000" stroke-width="1.2"/><path d="M950.5,425 Q955,432.5 950.5,440" fill="none" stroke="#000" stroke-width="1.2"/><text class="m" transform="translate(950,416) scale(1,1.0)" x="0" y="0" text-anchor="middle">Q0.7</text><rect x="953" y="432" width="34" height="1"/><rect x="986" y="424" width="1" height="18"/><rect x="322" y="568" width="42" height="1"/><rect x="363" y="560" width="1" height="18"/><rect x="377" y="560" width="1" height="18"/><text class="m" transform="translate(374,552) scale(1,1.0)" x="0" y="0" text-anchor="middle">Q0.7</text><rect x="377" y="568" width="50" height="1"/><rect x="426" y="543" width="81" height="1"/><rect x="426" y="645" width="81" height="1"/><rect x="426" y="543" width="1" height="103"/><rect x="506" y="543" width="1" height="103"/><text class="m" transform="translate(470.0,535) scale(1,1.0)" x="0" y="0" text-anchor="middle">T22</text><text class="sa" transform="translate(466.0,556.5) scale(1,1.0)" x="0" y="0" text-anchor="middle">S_ODT</text><text class="m" transform="translate(430,573) scale(1,1.0)" x="0" y="0" text-anchor="start">S</text><text class="m" transform="translate(504,573) scale(1,1.0)" x="0" y="0" text-anchor="end">Q</text><text class="m" transform="translate(430,607) scale(1,1.0)" x="0" y="0" text-anchor="start">TV</text><rect x="418" y="602" width="8" height="1"/><text class="m" transform="translate(414,607) scale(1,1.0)" x="0" y="0" text-anchor="end">S5T#3S</text><text class="m" transform="translate(504,607) scale(1,1.0)" x="0" y="0" text-anchor="end">BI</text><rect x="507" y="602" width="9" height="1"/><text class="m" transform="translate(519,607) scale(1,1.0)" x="0" y="0" text-anchor="start">...</text><text class="m" transform="translate(504,641) scale(1,1.0)" x="0" y="0" text-anchor="end">BCD</text><rect x="507" y="636" width="9" height="1"/><text class="m" transform="translate(519,641) scale(1,1.0)" x="0" y="0" text-anchor="start">...</text><text class="m" transform="translate(430,641) scale(1,1.0)" x="0" y="0" text-anchor="start">R</text><rect x="418" y="636" width="8" height="1"/><text class="m" transform="translate(414,641) scale(1,1.0)" x="0" y="0" text-anchor="end">...</text><rect x="506" y="568" width="305" height="1"/></g></svg>
<!-- vertical scrollbar -->
<div class="a" style="left:1347px;top:79px;width:17px;height:622px;background:linear-gradient(to right,#F0EFE8,#F7F6F2 40%,#F3F2EC)"></div>
<div class="a xpb" style="left:1348px;top:80px"><svg class="a" style="left:2px;top:3px" width="12" height="9" viewBox="0 0 12 9"><path d="M2 6.5 L6 2.5 L10 6.5" fill="none" stroke="#4D6185" stroke-width="2.2"/></svg></div>
<div class="a xpb" style="left:1348px;top:685px"><svg class="a" style="left:2px;top:3px" width="12" height="9" viewBox="0 0 12 9"><path d="M2 2.5 L6 6.5 L10 2.5" fill="none" stroke="#4D6185" stroke-width="2.2"/></svg></div>
<div class="a xpb" style="left:1348px;top:495px;height:16px"><svg class="a" style="left:3px;top:3px" width="10" height="9" viewBox="0 0 10 9" shape-rendering="crispEdges"><g fill="#EEF4FE"><rect x="1" y="1" width="7" height="1"/><rect x="1" y="3" width="7" height="1"/><rect x="1" y="5" width="7" height="1"/><rect x="1" y="7" width="7" height="1"/></g><g fill="#A4BEF2"><rect x="2" y="2" width="7" height="1"/><rect x="2" y="4" width="7" height="1"/><rect x="2" y="6" width="7" height="1"/><rect x="2" y="8" width="7" height="1"/></g></svg></div>
<!-- horizontal scrollbar -->
<div class="a" style="left:306px;top:701px;width:1041px;height:17px;background:linear-gradient(to bottom,#F0EFE8,#F7F6F2 40%,#F3F2EC)"></div>
<div class="a xpb" style="left:306px;top:702px"><svg class="a" style="left:3px;top:2px" width="9" height="12" viewBox="0 0 9 12"><path d="M6.5 2 L2.5 6 L6.5 10" fill="none" stroke="#4D6185" stroke-width="2.2"/></svg></div>
<div class="a xpb" style="left:323px;top:702px"><svg class="a" style="left:3px;top:3px" width="9" height="10" viewBox="0 0 9 10" shape-rendering="crispEdges"><g fill="#EEF4FE"><rect x="1" y="1" width="1" height="7"/><rect x="3" y="1" width="1" height="7"/><rect x="5" y="1" width="1" height="7"/><rect x="7" y="1" width="1" height="7"/></g><g fill="#A4BEF2"><rect x="2" y="2" width="1" height="7"/><rect x="4" y="2" width="1" height="7"/><rect x="6" y="2" width="1" height="7"/><rect x="8" y="2" width="1" height="7"/></g></svg></div>
<div class="a xpb" style="left:1330px;top:702px"><svg class="a" style="left:3px;top:2px" width="9" height="12" viewBox="0 0 9 12"><path d="M2.5 2 L6.5 6 L2.5 10" fill="none" stroke="#4D6185" stroke-width="2.2"/></svg></div>
<div class="a" style="left:1347px;top:701px;width:17px;height:17px;background:#ECE9D8"></div>


<div id="status" class="a"><span class="a" style="left:1.5px;top:6px;letter-spacing:-0.15px">Press F1 to get Help.</span></div>
<div class="a" style="left:0;top:718px;width:306px;height:1px;background:#ACA899"></div><div class="a" style="left:0;top:719px;width:1366px;height:1px;background:#FBFAF5"></div>
<div class="a sp" style="left:920px;top:722px;width:32px"></div>
<svg class="a" style="left:955px;top:724px" width="10" height="10" viewBox="0 0 10 10" shape-rendering="crispEdges"><rect x="1" y="0" width="8" height="6" fill="#000"/><rect x="2" y="1" width="6" height="4" fill="#fff"/><rect x="3" y="2" width="3" height="2" fill="#000"/><rect x="4" y="6" width="2" height="1" fill="#000"/><rect x="0" y="7" width="10" height="2" fill="#000"/></svg>
<div class="a sp" style="left:971px;top:722px;width:84px">offline</div>
<div class="a sp" style="left:1058px;top:722px;width:63px">Abs &lt; 5.2</div>
<div class="a sp" style="left:1123px;top:722px;width:96px"></div>
<div class="a sp" style="left:1221px;top:722px;width:33px">Insert</div>
<div class="a sp" style="left:1256px;top:722px;width:29px"></div>
<div class="a sp" style="left:1288px;top:722px;width:78px"></div>

<div class="a" style="left:0;top:737px;width:1366px;height:1px;background:#F2F2FA"></div>
<div id="task" class="a"></div>
<!-- start button -->
<div class="a" style="left:0;top:738px;width:109px;height:30px;border-radius:0 10px 10px 0;background:linear-gradient(to bottom,#3C9A3C 0px,#58B858 2px,#3EA23E 5px,#329A32 12px,#2F932F 22px,#2A8A2A 27px,#1E6E1E 30px);box-shadow:inset -2px 0 2px #1E641E"></div>
<svg class="a" style="left:10px;top:743px" width="20" height="19" viewBox="0 0 20 19">
 <path d="M3 2 Q6 0.5 9.5 2 L8.5 8.5 Q5 7 2 8.5 Z" fill="#E85A24"/>
 <path d="M10.5 2.5 Q14 4 18 2.5 L17 9 Q13.5 10.5 9.5 9 Z" fill="#7EC43A"/>
 <path d="M2 9.5 Q5 8 8.5 9.5 L7.5 16 Q4 14.5 1 16 Z" fill="#3E7EE0"/>
 <path d="M9.5 10 Q13 11.5 17 10 L16 16.5 Q12.5 18 8.5 16.5 Z" fill="#F8C820"/>
</svg>
<div class="a" style="left:35px;top:743.5px;color:#fff;font-size:17px;font-weight:bold;font-style:italic;text-shadow:1px 1px 1px #1A4A1A;letter-spacing:0px">Başlat</div>
<!-- quick launch -->
<svg class="a" style="left:122px;top:744px" width="64" height="17" viewBox="0 0 64 17">
 <circle cx="9.5" cy="8.5" r="4.6" fill="none" stroke="#3A9CEA" stroke-width="2.4"/>
 <path d="M5 8.5 H14" stroke="#3A9CEA" stroke-width="1.8"/>
 <path d="M12 11 L15 11" stroke="#2A62D8" stroke-width="2"/>
 <path d="M3 16 Q0 9 8 3.5 Q14 0 16.5 2.5" fill="none" stroke="#E8C040" stroke-width="1.8"/>
 <rect x="26" y="2" width="12" height="13" rx="2" fill="#E8F2FC" stroke="#0A2A80" stroke-width="1.2"/>
 <path d="M29 5 V12 H35" fill="none" stroke="#2060B0" stroke-width="1.3"/>
 <path d="M31 10 L36 4" stroke="#000" stroke-width="1.4"/>
 <circle cx="54" cy="8.5" r="7.5" fill="#3060D0"/>
 <path d="M54 1 A7.5 7.5 0 0 0 46.5 8.5 L54 8.5Z" fill="#E84828"/>
 <path d="M54 1 A7.5 7.5 0 0 1 61.5 8.5 L54 8.5Z" fill="#58A838"/>
 <path d="M61.5 8.5 A7.5 7.5 0 0 1 54 16 L54 8.5Z" fill="#E8D048"/>
 <circle cx="54" cy="8.5" r="4" fill="#F4F4F4"/>
 <path d="M52.5 6 L57 8.5 L52.5 11Z" fill="#000"/>
</svg>
<!-- task buttons -->
<div class="a tbtn" style="left:196px;width:158px"></div>
<svg class="a" style="left:205px;top:745px" width="16" height="16" viewBox="0 0 16 16"><rect x="0" y="0" width="16" height="16" fill="#D8D0D8"/><path d="M1 13 L9 2.5 Q11 0.5 13.5 2 Q15 4 13 6 L5 15 Q2.5 16.5 1 14.5Z" fill="#000"/><path d="M1.5 11 L8 3" stroke="#fff" stroke-width="0.9"/><path d="M4 10.5 L6 12.5" stroke="#FFF0D0" stroke-width="0.9"/><path d="M10 8 H14.5 L12 14" fill="none" stroke="#30F0E0" stroke-width="1.8"/></svg>
<div class="a tbt" style="left:225px">SIMATIC Manager - [...</div>
<div class="a tbtn" style="left:356px;width:158px"></div>
<svg class="a" style="left:365px;top:745px" width="16" height="16" viewBox="0 0 16 16"><path d="M1 3.5 h5 l1.5 1.5 h7.5 v9.5 h-14z" fill="#F0C848" stroke="#A07818" stroke-width="1"/><path d="M1 7 h14" stroke="#FFE890" stroke-width="1"/></svg>
<div class="a tbt" style="left:385px">plc_screenshot</div>
<div class="a tbtn" style="left:516px;width:158px"></div>
<svg class="a" style="left:526px;top:745px" width="16" height="16" viewBox="0 0 16 16"><path d="M3 6 L4.5 15 H11.5 L13 6Z" fill="#A8B8B0" stroke="#606860" stroke-width="1"/><path d="M5 8 L6 14 M8 8 V14 M11 8 L10 14" stroke="#E04020" stroke-width="1.3"/><path d="M6 6 L4 1 M9 6 L10 0.5 M10.5 6 L13 2" stroke="#C08020" stroke-width="1.2"/></svg>
<div class="a tbt" style="left:545px">flaşör3 - Paint</div>
<div class="a tbtn act" style="left:676px;width:158px"></div>
<svg class="a" style="left:686px;top:745px" width="16" height="16" viewBox="0 0 16 16" shape-rendering="crispEdges">
  <rect x="0" y="0" width="16" height="16" fill="#E8E4E0"/>
  <rect x="0" y="0" width="1" height="16" fill="#000"/>
  <rect x="0" y="3" width="7" height="1" fill="#000"/><rect x="3" y="1" width="1" height="5" fill="#000"/><rect x="5" y="1" width="1" height="5" fill="#000"/>
  <rect x="0" y="10" width="7" height="1" fill="#000"/><rect x="3" y="8" width="1" height="5" fill="#000"/><rect x="5" y="8" width="1" height="5" fill="#000"/>
  <rect x="6" y="3" width="10" height="1" fill="#000"/>
  <path d="M11 1 L13 3 L11 5 L9 3Z" fill="#fff" stroke="#000" stroke-width="1" shape-rendering="auto"/>
  <path d="M7 6 L10 7 L8 9Z" fill="#000"/>
  <path d="M9 9 L11 7 L16 12 L14 15Z" fill="#E8C020" shape-rendering="auto"/>
  <path d="M10 10 L15 15 M12 9 L16 13" stroke="#B02000" stroke-width="1.2" shape-rendering="auto"/>
</svg>
<div class="a tbt" style="left:705px;letter-spacing:-0.2px">LAD/STL/FBD&nbsp; - [OB1 ...</div>
<!-- tray -->
<div class="a" style="left:1291px;top:738px;width:1px;height:30px;background:#1A3E9A"></div>
<div class="a" style="left:1292px;top:738px;width:74px;height:30px;background:linear-gradient(to bottom,#18A8F8 0px,#1EA6F2 2px,#0F98EA 5px,#0E92E6 20px,#0D86DA 27px,#1464C0 30px);box-shadow:inset 1px 0 0 #4CC2F8"></div>
<div class="a" style="left:1266px;top:747px;color:#fff;font-size:11px">TR</div>
<svg class="a" style="left:1282px;top:744px" width="19" height="19" viewBox="0 0 19 19"><circle cx="9.5" cy="9.5" r="8.5" fill="#3A8EF0" stroke="#fff" stroke-width="0.8"/><circle cx="9.5" cy="9.5" r="8.8" fill="none" stroke="#1A3C90" stroke-width="0.6" stroke-dasharray="14 40"/><path d="M11 5.5 L7 9.5 L11 13.5" fill="none" stroke="#fff" stroke-width="2.2"/></svg>
<svg class="a" style="left:1303px;top:746px" width="13" height="14" viewBox="0 0 13 14"><path d="M6.5 0.5 Q9.5 2 12.5 1.5 Q13 9 6.5 13.5 Q0 9 0.5 1.5 Q3.5 2 6.5 0.5Z" fill="#C81820" stroke="#600810" stroke-width="0.8"/><path d="M4 4.5 L9 9.5 M9 4.5 L4 9.5" stroke="#fff" stroke-width="1.6"/></svg>
<div class="a" style="left:1325px;top:747px;color:#fff;font-size:11px">13:48</div>


</body></html>
